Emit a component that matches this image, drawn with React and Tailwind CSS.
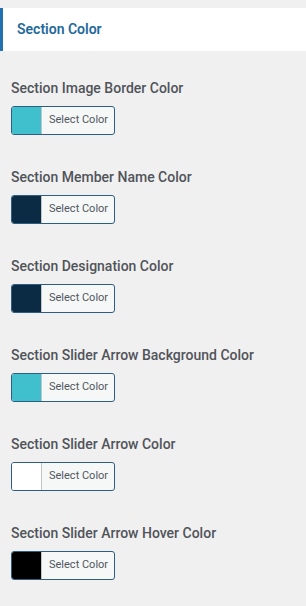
import React from 'react';

const fields = [
  { label: 'Section Image Border Color', color: '#40bfcc' },
  { label: 'Section Member Name Color', color: '#0b2a44' },
  { label: 'Section Designation Color', color: '#0b2a44' },
  { label: 'Section Slider Arrow Background Color', color: '#40bfcc' },
  { label: 'Section Slider Arrow Color', color: '#ffffff' },
  { label: 'Section Slider Arrow Hover Color', color: '#000000' },
];

const ColorField = ({ label, color }) => (
  <div className="flex flex-col">
    <label className="text-[14px] leading-[18px] font-medium text-[#50545a]">{label}</label>
    <button className="mt-[9px] flex h-[29px] w-[104px] items-stretch overflow-hidden rounded-[3px] border border-[#2d5e80] bg-[#f6f7f7] text-left">
      <span className="w-[30px] border-r border-[#c3c4c7]" style={{ backgroundColor: color }} />
      <span className="flex items-center pl-[7px] text-[11px] text-[#50575e]">Select Color</span>
    </button>
  </div>
);

export default function App() {
  return (
    <div className="min-h-[606px] w-[306px] bg-[#f0f0f0] pt-[8px]" style={{ fontFamily: 'Roboto, "Noto Sans", sans-serif' }}>
      <div className="flex h-[43px] items-center border-l-[3px] border-[#2271b1] bg-white pl-[14px]">
        <span className="text-[14px] font-semibold text-[#1f6a9a]">Section Color</span>
      </div>
      <div className="flex flex-col gap-[33px] px-[11px] pt-[28px]">
        {fields.map((f) => (
          <ColorField key={f.label} label={f.label} color={f.color} />
        ))}
      </div>
    </div>
  );
}
